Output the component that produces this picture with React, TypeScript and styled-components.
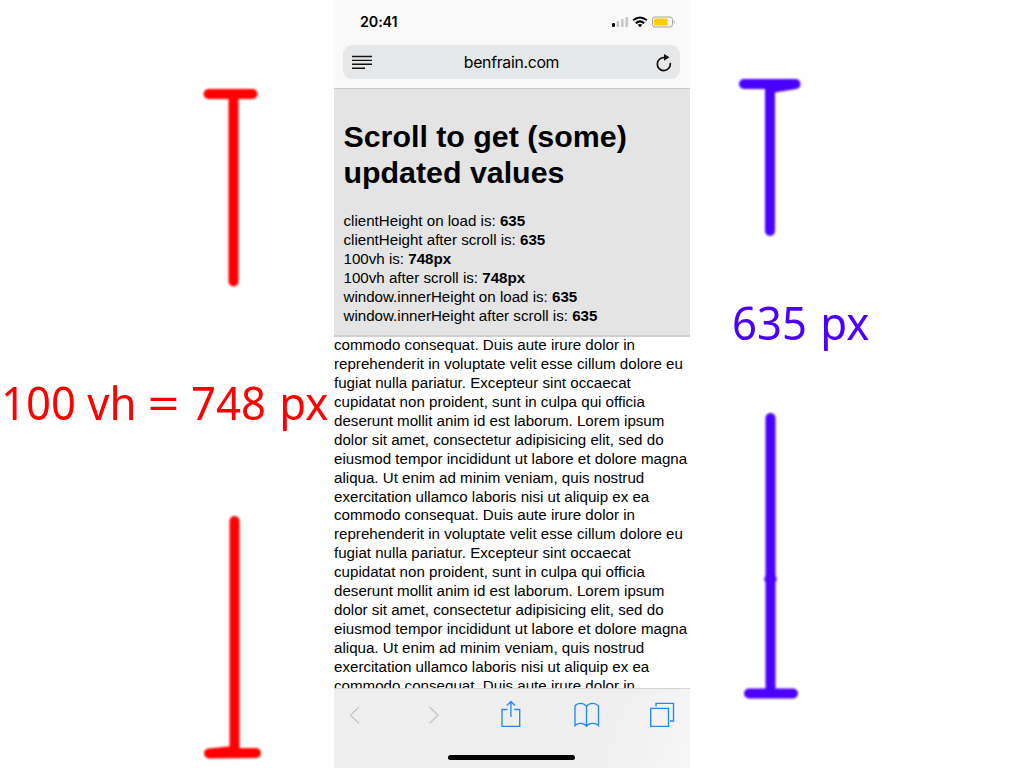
import React from 'react';
import styled, { createGlobalStyle } from 'styled-components';

const GlobalStyle = createGlobalStyle`
  * { box-sizing: border-box; }
  body { margin: 0; background: #fff; overflow: hidden; }
  svg { display: block; flex: none; overflow: visible; }
`;

const Page = styled.div`
  display: grid;
  grid-template-columns: 334px 356px 334px;
  width: 1024px;
  height: 768px;
  overflow: hidden;
  font-family: "Liberation Sans", Arial, sans-serif;
  color: #000;
`;

const Measure = styled.section<{ $color: string }>`
  display: flex;
  flex-direction: column;
  height: 768px;
  color: ${(p) => p.$color};
`;

const MeasureLabel = styled.div<{ $indent: number }>`
  height: 63px;
  padding-left: ${(p) => p.$indent}px;
  font: 400 46px/63px "Noto Sans", "Open Sans", sans-serif;
  white-space: nowrap;
`;

const Condensed = styled.span`
  display: inline-block;
  transform: scaleX(0.95);
  transform-origin: 0 0;
`;

const Equals = styled.span`
  display: inline-block;
  margin: 0 3.5px;
  transform: scaleX(1.28);
`;

const Unit = styled.span`
  margin-left: 2px;
`;

const Phone = styled.main`
  display: flex;
  flex-direction: column;
  height: 768px;
  overflow: hidden;
`;

const BrowserHeader = styled.header`
  flex: none;
  height: 89px;
  padding: 0 10px 0 9px;
  background: #f9f9f9;
  border-bottom: 1px solid #c9c9c9;
`;

const StatusBar = styled.div`
  display: flex;
  align-items: center;
  justify-content: space-between;
  height: 45px;
  padding: 0 4px 1px 17px;
`;

const Clock = styled.span`
  font: 600 14.3px/18px Inter, sans-serif;
  letter-spacing: -0.1px;
`;

const AddressBar = styled.div`
  display: flex;
  align-items: center;
  justify-content: space-between;
  height: 34px;
  padding: 0 7px 0 9px;
  border-radius: 9px;
  background: #e6e7e9;
`;

const Address = styled.span`
  padding: 2px 5px 0 0;
  font: 400 15.8px/20px Inter, sans-serif;
  letter-spacing: -0.3px;
`;

const Values = styled.section`
  flex: none;
  height: 248px;
  padding: 30px 9.5px 0;
  background: #e4e4e4;
  border-bottom: 2px solid #cfcfcf;
`;

const Title = styled.h1`
  margin: 0 0 21px;
  font-size: 30.35px;
  line-height: 36px;
  white-space: nowrap;
`;

const ValueRow = styled.div`
  font-size: 15.14px;
  line-height: 18.9px;
  white-space: nowrap;
`;

const Article = styled.article`
  flex: 1;
  min-height: 0;
  margin-top: -1px;
  overflow: hidden;
  font-size: 15.14px;
  line-height: 18.94px;
`;

const Line = styled.div`
  white-space: nowrap;
`;

const Toolbar = styled.footer`
  flex: none;
  display: flex;
  flex-direction: column;
  align-items: center;
  height: 80px;
  border-top: 1px solid #d5d5d5;
  background: linear-gradient(110deg, #eeeeee 0%, #efefef 75%, #f7f7f7 100%);
`;

const Actions = styled.nav`
  height: 66px;
`;

const HomeIndicator = styled.div`
  width: 127px;
  height: 5px;
  border-radius: 3px;
  background: #000;
  margin-left: -1px;
`;

const values: [string, string][] = [
  ['clientHeight on load is:', '635'],
  ['clientHeight after scroll is:', '635'],
  ['100vh is:', '748px'],
  ['100vh after scroll is:', '748px'],
  ['window.innerHeight on load is:', '635'],
  ['window.innerHeight after scroll is:', '635'],
];

const paragraph = [
  'commodo consequat. Duis aute irure dolor in',
  'reprehenderit in voluptate velit esse cillum dolore eu',
  'fugiat nulla pariatur. Excepteur sint occaecat',
  'cupidatat non proident, sunt in culpa qui officia',
  'deserunt mollit anim id est laborum. Lorem ipsum',
  'dolor sit amet, consectetur adipisicing elit, sed do',
  'eiusmod tempor incididunt ut labore et dolore magna',
  'aliqua. Ut enim ad minim veniam, quis nostrud',
  'exercitation ullamco laboris nisi ut aliquip ex ea',
];
const lines = [...paragraph, ...paragraph, paragraph[0]];

function Brush({ top, height, id, children }: { top: number; height: number; id: string; children: React.ReactNode }) {
  return (
    <svg width="334" height={height} viewBox={`0 ${top} 334 ${height}`} fill="none" stroke="currentColor" strokeWidth="10" strokeLinecap="round" strokeLinejoin="round">
      <filter id={id} filterUnits="userSpaceOnUse" x="0" y={top} width="334" height={height}>
        <feGaussianBlur stdDeviation="1.3" />
      </filter>
      <g filter={`url(#${id})`}>{children}</g>
    </svg>
  );
}

export default function App() {
  return (
    <>
      <GlobalStyle />
      <Page>
        <Measure $color="#ff0000">
          <Brush id="red-top" top={0} height={371}>
            <path d="M208.5 94H252.5M233.5 95V281.5" />
          </Brush>
          <MeasureLabel $indent={1}>
            <Condensed>100 vh <Equals>=</Equals> 748 <Unit>px</Unit></Condensed>
          </MeasureLabel>
          <Brush id="red-bottom" top={434} height={334}>
            <path d="M234.5 521V750M209 753.5L234 751M209 753.5L256 753" />
          </Brush>
        </Measure>
        <Phone>
          <BrowserHeader>
            <StatusBar>
              <Clock>20:41</Clock>
              <svg width="65" height="12" viewBox="0 0 65 12">
                <rect x="1" y="7" width="3" height="4" rx="1" />
                <g fill="#c7c7c7">
                  <rect x="5.5" y="5" width="2.7" height="6" rx=".7" />
                  <rect x="10" y="3" width="2.7" height="8" rx=".7" />
                  <rect x="14.4" y="1" width="2.7" height="10" rx=".7" />
                </g>
                <g fill="none" stroke="#000" strokeWidth="2">
                  <path d="M22.2 4.3Q29-1.4 35.8 4.3M24.8 7.2Q29 3.5 33.2 7.2" />
                </g>
                <path d="M26.7 8.7Q29 7.1 31.3 8.7L29 11.2Z" />
                <rect x="41.5" y="1" width="20" height="10" rx="2.6" fill="none" stroke="#a4a4a8" />
                <rect x="43" y="2.5" width="13.6" height="7" rx="1.2" fill="#ffcc00" />
                <path d="M62.8 4.2Q65 6 62.8 7.8Z" fill="#a4a4a8" />
              </svg>
            </StatusBar>
            <AddressBar>
              <svg width="20" height="14" viewBox="0 0 20 14" fill="none" stroke="#111" strokeWidth="1.4">
                <path d="M0 1.5H20M0 5.4H20M0 9.3H20M0 13.2H13" />
              </svg>
              <Address>benfrain.com</Address>
              <svg width="17" height="18" viewBox="0 0 17 18" fill="none" stroke="#111" strokeWidth="1.7">
                <path d="M8.5 4.6A6.5 6.5 0 1 0 14.3 10.7" strokeLinecap="round" />
                <path d="M8 1L13.5 4.3L8 7.7Z" fill="#111" stroke="none" />
              </svg>
            </AddressBar>
          </BrowserHeader>
          <Values>
            <Title>Scroll to get (some)<br />updated values</Title>
            {values.map(([label, value]) => (
              <ValueRow key={label}>{label} <b>{value}</b></ValueRow>
            ))}
          </Values>
          <Article>
            {lines.map((line, i) => <Line key={i}>{line}</Line>)}
          </Article>
          <Toolbar>
            <Actions>
              <svg width="356" height="66" viewBox="0 1 356 66" fill="none" stroke="#2388f5" strokeWidth="1.35">
                <path d="M25 19L16.5 27.3L25 35.5M95.5 19L104 27.3L95.5 35.5" stroke="#c5c5c7" strokeWidth="1.2" />
                <path d="M173.5 21.5H168V38.3H185.7V21.5H180.2M176.9 29V13.8M172.8 17.5L176.9 13.5L181 17.5" />
                <path d="M252.5 18.5C250 14.5 243.5 14.5 241 18V37.5C244 34.5 250 34.5 252.5 38.2C255 34.5 261.5 34.5 264.5 37.5V18C261.5 14.5 255 14.5 252.5 18.5V38.2" />
                <path d="M316.7 20.3H334.5V38.3H316.7ZM322 18.5V15.3H339.5V33H336" />
              </svg>
            </Actions>
            <HomeIndicator />
          </Toolbar>
        </Phone>
        <Measure $color="#4b00ff">
          <Brush id="blue-top" top={0} height={291}>
            <path d="M54 84H105.5L81 88M80 86V231" />
          </Brush>
          <MeasureLabel $indent={42}>
            <Condensed>635 <Unit>px</Unit></Condensed>
          </MeasureLabel>
          <Brush id="blue-bottom" top={354} height={414}>
            <path d="M80.5 418V693M59 693.5H103M79.3 579H81.7" />
          </Brush>
        </Measure>
      </Page>
    </>
  );
}
